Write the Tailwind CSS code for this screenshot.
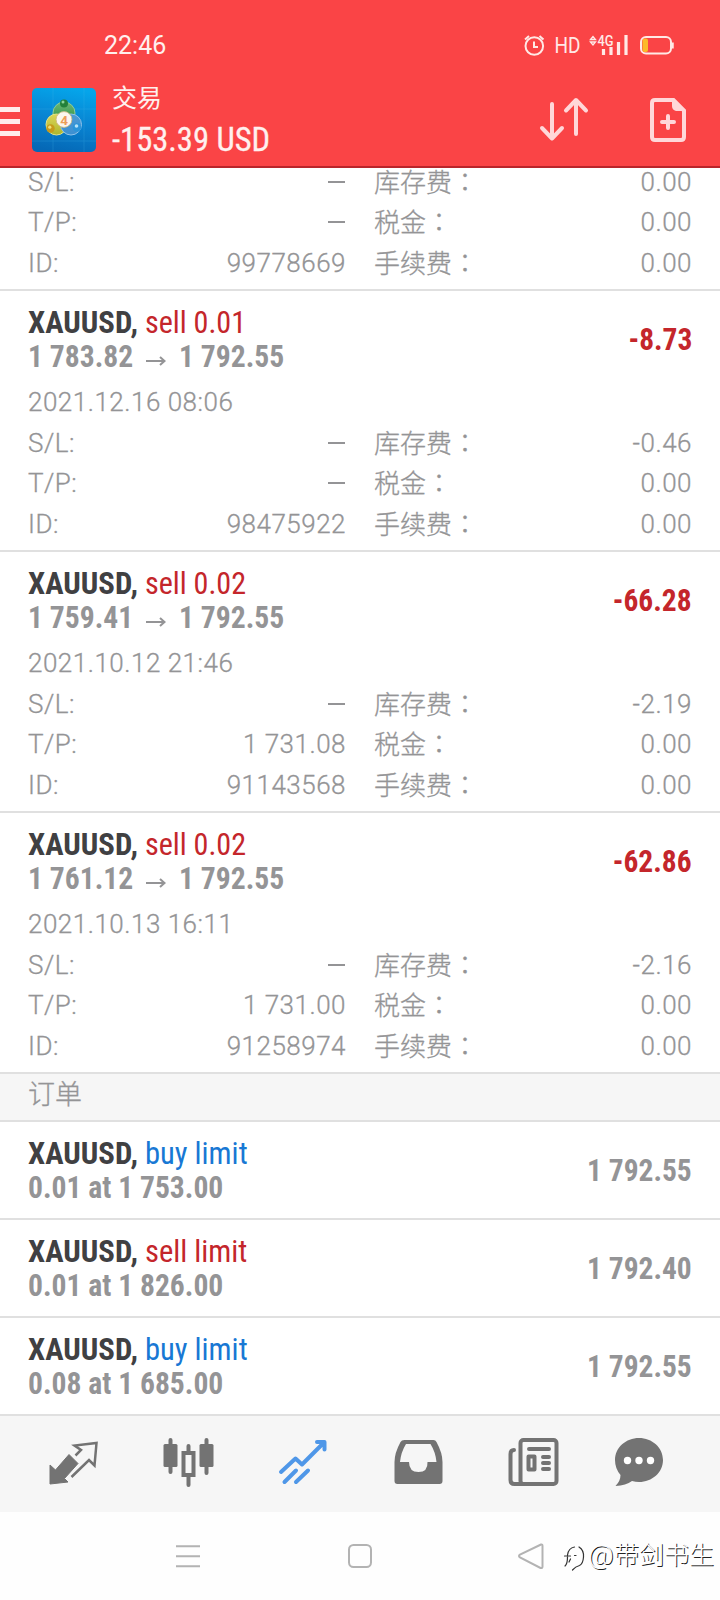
<!DOCTYPE html>
<html lang="zh-CN">
<head>
<meta charset="utf-8">
<title>交易</title>
<script src="https://cdn.jsdelivr.net/npm/@tailwindcss/browser@4"></script>
</head>
<body class="w-[720px] h-[1600px] overflow-hidden bg-white font-['Roboto','Noto_Sans_CJK_SC',sans-serif]">
<div class="flex flex-col w-[720px] h-[1600px]">

  <!-- status bar and app header -->
  <header class="h-[168px] shrink-0 bg-[#fa4446] border-b-2 border-[#b9252b] text-[#fff0ee]">
    <div class="h-[78px] flex items-end justify-between pl-[104px] pr-[46px]">
      <span class="text-[25px] leading-[30px] mb-[17px]">22:46</span>
      <svg class="w-[152px] h-[26px] mb-[19px]" viewBox="522 33 152 26" fill="none" stroke="#ffe9e6">
        <circle cx="534.300" cy="46" r="8.800" stroke-width="2"/>
        <path d="M534 41.500V47H538M525 39.500l4-3.500M543.500 39.500l-4-3.500" stroke-width="2"/>
        <text x="554.500" y="53" font-size="22.500" font-family="Roboto" fill="#ffe9e6" stroke="none" textLength="26" lengthAdjust="spacingAndGlyphs">HD</text>
        <path d="M590.500 39.500l2.500-3 2.500 3zM590.500 42l2.500 3 2.500-3z" stroke-width="1.300"/>
        <text x="597.500" y="46" font-size="14" font-weight="500" font-family="Roboto" fill="#ffe9e6" stroke="none" textLength="16" lengthAdjust="spacingAndGlyphs">4G</text>
        <path d="M603.500 49v6M611 47v8M618.500 42v13M626 35v20" stroke-width="3.200"/>
        <rect x="641" y="37" width="30" height="16.500" rx="5" stroke-width="2"/>
        <rect x="642.500" y="38.500" width="5.500" height="13.500" rx="2" fill="#fcb928" stroke="none"/>
        <path d="M672.500 42.500v6" stroke-width="2.500"/>
      </svg>
    </div>
    <div class="h-[88px] flex items-start">
      <svg class="w-5 h-[30px] mt-[28px]" viewBox="0 0 20 30" fill="#ffeceb"><path d="M0 1h20v5H0zM0 13h20v5H0zM0 25h20v5H0z"/></svg>
      <svg class="w-16 h-16 ml-3 mt-[10px]" viewBox="0 0 64 64">
        <defs>
          <linearGradient id="bg" x1="0.600" y1="0" x2="0.400" y2="1"><stop offset="0" stop-color="#05a5ea"/><stop offset=".5" stop-color="#0884d2"/><stop offset="1" stop-color="#0568b6"/></linearGradient>
          <linearGradient id="gr" x1="0" y1="0" x2="0" y2="1"><stop offset="0" stop-color="#6fb878"/><stop offset="1" stop-color="#238b38"/></linearGradient>
          <linearGradient id="ye" x1="0" y1="0" x2="0" y2="1"><stop offset="0" stop-color="#dcd558"/><stop offset="1" stop-color="#aeb62d"/></linearGradient>
          <linearGradient id="bl" x1="0" y1="0" x2="0" y2="1"><stop offset="0" stop-color="#4d9ad4"/><stop offset="1" stop-color="#3b8fd2"/></linearGradient>
        </defs>
        <rect width="64" height="64" rx="5" fill="url(#bg)"/>
        <path d="M21 0v64M52 0v64M0 21h64M0 53h64" stroke="#4cbbec" stroke-width=".7" opacity=".3"/>
        <circle cx="32" cy="25" r="11" fill="url(#gr)" stroke="#8fcb96" stroke-width="1"/>
        <circle cx="24.500" cy="36.500" r="10.500" fill="url(#ye)" stroke="#e4e388" stroke-width="1"/>
        <circle cx="39" cy="36.500" r="10.500" fill="url(#bl)" stroke="#8fc3ea" stroke-width="1"/>
        <circle cx="32" cy="15.500" r="4" fill="#23803a"/><circle cx="31" cy="14" r="1.500" fill="#8bd39a"/>
        <circle cx="18.500" cy="40.500" r="4.200" fill="#c79a1b"/><circle cx="17.800" cy="39.200" r="1.600" fill="#f2df75"/>
        <circle cx="45" cy="39.500" r="4.200" fill="#2a94d9"/><circle cx="44.500" cy="38" r="1.800" fill="#b6e2f8"/>
        <circle cx="32" cy="31.500" r="7.900" fill="#fbf6ee" stroke="#cbb77d" stroke-width=".8"/>
        <text x="28.200" y="36.500" font-family="Roboto" font-size="13.500" font-weight="700" fill="#ed9d58">4</text>
      </svg>
      <div class="ml-4 mt-2 w-[412px]">
        <div class="text-[25px] leading-[26px]">交易</div>
        <div class="text-[34px] leading-[40px] mt-[7px] font-stretch-condensed"><span class="inline-block origin-left scale-x-[0.957] [-webkit-text-stroke:0.3px]">-153.39 USD</span></div>
      </div>
      <svg class="w-[152px] h-[50px] mt-[16px] ml-[14px]" viewBox="538 94 152 50" fill="none" stroke="#ffd7d9">
        <path d="M552 104v34M542 128l10 10.500L562 128M576 134v-33M566 110.500l10-10.500 10 10.500" stroke-width="4" stroke-linecap="round" stroke-linejoin="round"/>
        <path d="M655 100h18.500l10.500 10.500V137q0 3-3 3H655q-3 0-3-3V103q0-3 3-3z" stroke-width="4"/>
        <path d="M672 98l14 13h-10q-4-1-4-5z" fill="#ffd7d9" stroke="none"/>
        <path d="M668 116v12M662 122h12" stroke-width="4" stroke-linecap="round"/>
      </svg>
    </div>
  </header>

  <main id="list" class="flex-1 min-h-0 overflow-hidden text-[#949496]"></main>

  <!-- bottom tab bar -->
  <nav class="h-[98px] shrink-0 bg-[#f6f6f6] border-t-2 border-[#e0e0e0]">
    <svg class="w-[720px] h-[96px]" viewBox="0 1416 720 96" fill="none" stroke="#737373">
      <path d="M50 1465l5.500 5L69 1454.500 78 1463.500 64.500 1478.500 68 1482 50 1484z" fill="#737373" stroke-width="1" stroke-linejoin="round"/>
      <path d="M75.500 1455.500l5.500-5.500-6.500-4.500L96.500 1443 94.500 1465.500 89 1460 71.500 1477" stroke-width="2.500"/>
      <path d="M170.500 1440v32M206.500 1440v33M188.500 1446v7M188.500 1476v9" stroke-width="4" stroke-linecap="round"/>
      <rect x="163.500" y="1444" width="14" height="23" rx="1.500" fill="#737373" stroke="none"/>
      <rect x="199.500" y="1444" width="14" height="23" rx="1.500" fill="#737373" stroke="none"/>
      <rect x="183.500" y="1453" width="10" height="22" stroke-width="4"/>
      <g stroke="#4f97e8" stroke-width="4" stroke-linecap="round" stroke-linejoin="round"><path d="M281 1472l14.500-13.500L302 1464.500 324 1442.500M317 1442h7.500v7.500M284.500 1482l11.500-11.500M296 1482l12-11.500"/></g>
      <path fill-rule="evenodd" d="M404.500 1440h29q2 0 3 2 6 11 6 20v19q0 3-3 3h-42q-3 0-3-3v-19q0-9 6-20 1-2 4-2zm1.500 4q-5 8-6 18h9q0 10 9.500 10t9-10h9q-1-10-6-18z" fill="#737373" stroke="none"/>
      <rect x="520.500" y="1440" width="36" height="44" rx="3" stroke-width="4"/>
      <path d="M514 1450q-3.500 0-3.500 4V1480q0 4 4 4h8" stroke-width="4" stroke-linecap="round"/>
      <path d="M529 1449h20M543 1457h6M543 1463h6M543 1469h6" stroke-width="4" stroke-linecap="round"/>
      <rect x="528.500" y="1456.500" width="6" height="13" stroke-width="4" stroke-linejoin="round"/>
      <path d="M639 1438c13 0 24 9.500 24 22s-11 22-24 22q-3.500 0-7-1-6 4.500-16.500 5 5-5 5-11-5.500-6.500-5.500-15c0-12.500 11-22 24-22z" fill="#737373" stroke="none"/>
      <g fill="#fff" stroke="none"><circle cx="627.500" cy="1460.500" r="3.700"/><circle cx="639" cy="1460.500" r="3.700"/><circle cx="650.500" cy="1460.500" r="3.700"/></g>
    </svg>
  </nav>

  <!-- system navigation -->
  <footer class="relative h-[88px] shrink-0 bg-[#fefefe]">
    <svg class="w-[720px] h-[88px]" viewBox="0 1512 720 88" fill="none" stroke="#b3b3b3" stroke-width="2">
      <path d="M176 1546.300h24M176 1556.300h24M176 1566.300h24"/>
      <rect x="349" y="1545" width="22" height="22" rx="4.500"/>
      <path d="M541 1544.500q1.500-.5 1.500 1.500v20.500q0 2-2 1.500L520 1557.500q-2-1.500 0-3z"/>
      <g fill="none" stroke-linecap="round" stroke="#333" stroke-width="1.200"><path d="M565 1566q2.500-2 2.500-9M564.500 1556h6M567.500 1555q1-7 7-8M579 1547q5 3 4.500 10-.5 7-4 8.500-4 1-7 4.500M574.500 1555.500h1.500M569 1562l1.500-3"/></g>
    </svg>
    <span class="absolute left-[588px] top-[29px] text-[25px] leading-[30px] whitespace-nowrap text-white font-light [text-shadow:1px_1px_0px_#222] flex"><span class="w-[26px]"><span class="inline-block origin-left scale-x-[1.12]">@</span></span>带剑书生</span>
  </footer>
</div>
<script>
  const dash = '<i class="block w-[17px] h-[2px] bg-[#949496]"></i>';
  const pair = (k, v, k2, v2, h) => `<div class="flex ${h} shrink-0 items-center text-[26px] leading-[40px] font-light tracking-[0.5px] [-webkit-text-stroke:0.3px]">
    <span class="w-[120px]">${k}</span><span class="w-[197px] flex justify-end items-center">${v === '–' ? dash : '<span class="-mr-px">' + v + '</span>'}</span>
    <span class="ml-[29px] w-[120px] whitespace-nowrap tracking-normal">${k2}<span class="font-['Noto_Sans_CJK_TC']" lang="zh-TW">：</span></span><span class="flex-1 text-right">${v2}</span></div>`;
  const details = (tp, id, swap) => pair('S/L:', '–', '库存费', swap, 'h-[40px]') + pair('T/P:', tp, '税金', '0.00', 'h-[40px]') + pair('ID:', id, '手续费', '0.00', 'h-[41px]');
  const head = (side, color, sub, value, vcolor) => `<div class="flex justify-between items-center h-[68px] text-[32px] leading-[34px] font-stretch-condensed">
    <div><div class="flex whitespace-nowrap"><b class="w-[117px] shrink-0 text-[#404042]"><span class="inline-block origin-left scale-x-[0.96]">XAUUSD,</span></b><span class="inline-block origin-left ${side.includes('limit') ? 'scale-x-[0.955]' : 'scale-x-[0.94]'} ${color}">${side}</span></div><div class="flex font-bold whitespace-nowrap">${sub}</div></div>
    <b class="origin-right scale-x-[0.92] ${vcolor}">${value}</b></div>`;
  const squeeze = t => `<span class="inline-block origin-left scale-x-[0.925]">${t}</span>`;
  const red = 'text-[#c4262b]', blue = 'text-[#1878d4]', grey = 'text-[#949496]';
  const arrow = '<svg class="w-[20px] h-[12px] mr-[13px] mt-[16px]" viewBox="0 0 20 12" fill="none" stroke="#949496" stroke-width="2"><path d="M0 6h18.500M14 2L18.500 6l-4.500 4"/></svg>';
  const position = (vol, from, date, value, tp, id, swap) => `<section class="h-[261px] px-7 pt-[14px] border-b-2 border-[#e0e0e0]">
    ${head('sell ' + vol, red, '<span class="w-[118px] shrink-0">' + squeeze(from) + '</span>' + arrow + squeeze('1 792.55'), value, red)}
    <div class="h-[50px] pt-[9px] text-[26px] leading-[40px] font-light tracking-[0.5px] [-webkit-text-stroke:0.3px]">${date}</div>${details(tp, id, swap)}</section>`;
  const order = (side, color, sub, value) => `<section class="h-[98px] px-7 pt-[14px] border-b-2 border-[#e0e0e0]">${head(side, color, squeeze(sub), value, grey)}</section>`;
  document.getElementById('list').innerHTML =
    `<section class="flex flex-col justify-end h-[123px] px-7 pb-[6px] border-b-2 border-[#e0e0e0]">${details('–', '99778669', '0.00')}</section>` +
    position('0.01', '1 783.82', '2021.12.16 08:06', '-8.73', '–', '98475922', '-0.46') +
    position('0.02', '1 759.41', '2021.10.12 21:46', '-66.28', '1 731.08', '91143568', '-2.19') +
    position('0.02', '1 761.12', '2021.10.13 16:11', '-62.86', '1 731.00', '91258974', '-2.16') +
    `<h2 class="h-[48px] px-7 bg-[#f6f6f6] border-b-2 border-[#e0e0e0] text-[27px] leading-[42px] font-light [-webkit-text-stroke:0.3px]">订单</h2>` +
    order('buy limit', blue, '0.01 at 1 753.00', '1 792.55') +
    order('sell limit', red, '0.01 at 1 826.00', '1 792.40') +
    order('buy limit', blue, '0.08 at 1 685.00', '1 792.55');
</script>
</body>
</html>
